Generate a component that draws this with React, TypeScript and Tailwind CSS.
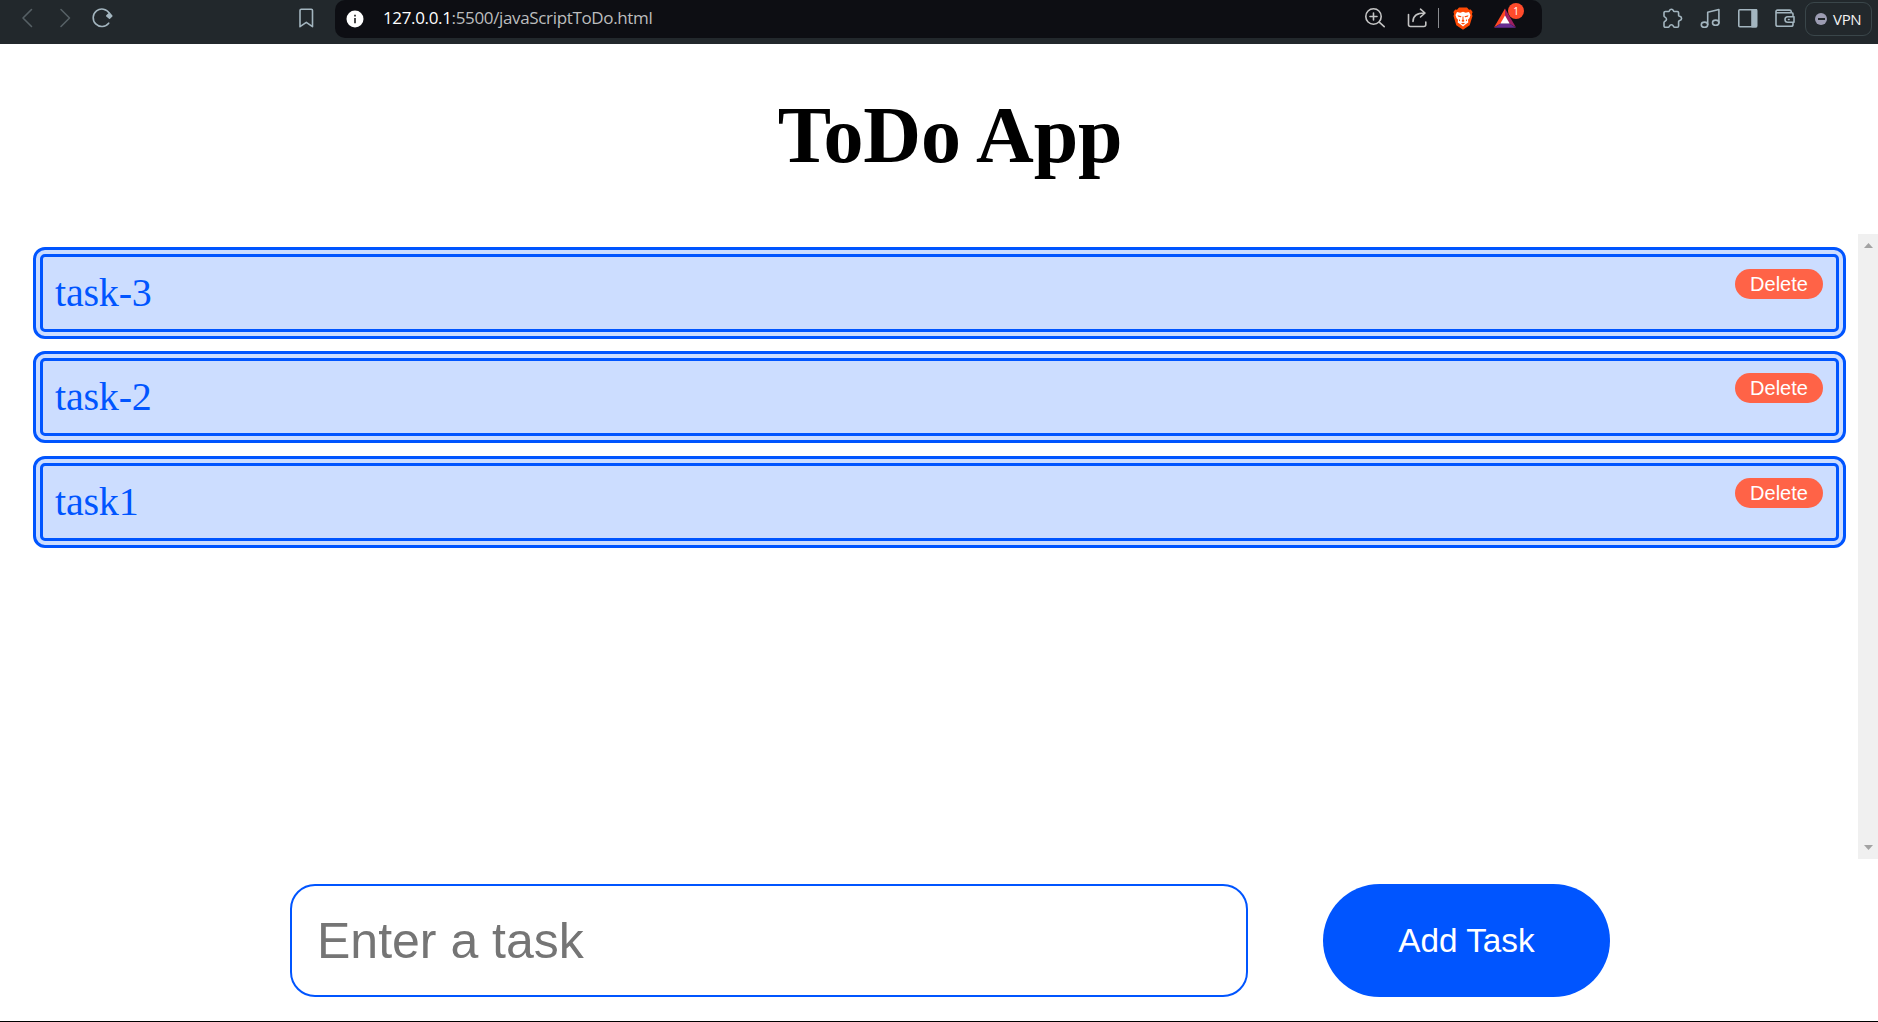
import { ReactNode } from "react";

function Icon({ children, className = "" }: { children: ReactNode; className?: string }) {
  return (
    <svg
      viewBox="0 0 24 24"
      fill="none"
      stroke="currentColor"
      strokeWidth="1.6"
      strokeLinecap="round"
      strokeLinejoin="round"
      className={`size-6 shrink-0 ${className}`}
    >
      {children}
    </svg>
  );
}

function BraveIcon() {
  return (
    <svg viewBox="0 0 20 23" className="ml-[14px] h-[23px] w-5 shrink-0">
      <path d="M6 .5h8l2 2.200 1.800-.200L19.600 5l-.7 2 .6 2-2.800 9.200L10 22.800l-6.700-4.600L.5 9l.6-2-.7-2 1.800-2.500 1.800.2z" fill="#ff4a05" />
      <path d="M4 5l3.300.7L10 4.700l2.700 1L16 5l1.500 3-1 3-1.500 1.800.3 2.700L13 17l-3 2.600L7 17l-2.300-1.500.3-2.700L3.500 11l-1-3z" fill="#fff" />
      <path d="M4.500 8.200l4 1.100-.6.900-2.600-.4zM15.500 8.200l-4 1.100.6.900 2.600-.4zM9.500 9.500h1v3l1 1.500-1.500 1.100L8.500 14l1-1.500zM6 12l1.300 1.600-1.300.7zM14 12l-1.300 1.600 1.300.7zM7.800 16.500l2.200-.8 2.200.8-2.200.9z" fill="#ff4a05" />
    </svg>
  );
}

function BatIcon() {
  return (
    <div className="relative ml-5 h-6 w-6 shrink-0">
      <svg viewBox="0 0 24 24" className="size-6">
        <path d="M12 2.500L1 21.500l7.500-4.500L12 10.500z" fill="#ff4724" />
        <path d="M12 2.500L23 21.500l-7.500-4.500L12 10.500z" fill="#9e1f63" />
        <path d="M1 21.800h22l-7-4.600H8z" fill="#662d91" />
        <path d="M12 9.500l4.600 8H7.400z" fill="#fff" />
      </svg>
      <span className="absolute -top-[3px] left-[15px] flex h-[16px] w-[16px] items-center justify-center rounded-full bg-[#ff4b2b] font-['Open_Sans',sans-serif] text-[10px] leading-none text-white">
        1
      </span>
    </div>
  );
}

function Toolbar() {
  return (
    <header className="flex h-11 shrink-0 items-start bg-[#22282c] font-['Open_Sans',sans-serif] text-[#a3b5bf]">
      <div className="flex h-9 w-[335px] items-center pl-4">
        <Icon className="text-[#566065]">
          <path d="M15.500 3.500L7 12l8.500 8.500" />
        </Icon>
        <Icon className="ml-[13px] text-[#566065]">
          <path d="M8 3.500l8.500 8.500L8 20.500" />
        </Icon>
        <Icon className="ml-[13px]">
          <path d="M19.300 7.200A8.700 8.700 0 1 0 18.700 17.200" />
          <path d="M19.500 7.200l2.300 2.700-2.300 2.300-2.700-2.300z" fill="currentColor" />
        </Icon>
        <Icon className="ml-auto mr-[17px]">
          <path d="M6 4.500a1.200 1.200 0 0 1 1.200-1.200h10.100a1.200 1.200 0 0 1 1.200 1.200v16.200l-6.200-4.400L6 20.700z" />
        </Icon>
      </div>

      <div className="h-[38px] w-[1207px] overflow-hidden rounded-[10px] bg-[#0d0e13]">
        <div className="flex h-9 items-center pl-[11px]">
          <svg viewBox="0 0 18 18" className="mt-px size-[18px] shrink-0">
            <circle cx="9" cy="9" r="8.500" fill="#fff" />
            <path d="M8.100 4.800h1.800v1.800H8.100zM8.100 8h1.800v5.200H8.100z" fill="#333" />
          </svg>
          <div className="ml-[19px] whitespace-nowrap text-[17px] leading-6 tracking-[-0.35px] text-[#bcbdbe]">
            <span className="text-white">127.0.0.1</span>:5500/javaScriptToDo.html
          </div>
          <div className="ml-auto flex h-9 items-center pr-[25px] text-[#c4c4c4]">
            <Icon>
              <circle cx="10.500" cy="10.500" r="7.700" />
              <path d="M16.200 16.200l5 4.500M10.500 7v7M7 10.500h7" />
            </Icon>
            <Icon className="ml-[19px]">
              <path d="M2.500 8.500v10a2 2 0 0 0 2 2h13.300a2 2 0 0 0 2-2V16M7 15.500c0-5 3-8.500 11.500-8.500M14.500 3.200L19 7l-4.500 4" />
            </Icon>
            <div className="ml-[8px] h-5 w-px bg-[#8a8c90]" />
            <BraveIcon />
            <BatIcon />
          </div>
        </div>
      </div>

      <div className="ml-auto flex h-9 items-center pr-[6px]">
        <Icon>
          <path d="M3 6.800a1.300 1.300 0 0 1 1.300-1.300H7.700C8.700 5.500 8 3.300 10.400 3.300S12.100 5.500 13.100 5.500h3.200a1.300 1.300 0 0 1 1.300 1.300V9.400c0 1.300 3 .6 3 3s-3 1.700-3 3V20a1.300 1.300 0 0 1-1.300 1.300H13.500c-1.200 0-.8-2.500-3.100-2.500s-1.900 2.500-3.100 2.500h-3A1.300 1.300 0 0 1 3 20v-3.500c0-1.500 2.500-1 2.500-3.300S3 11.400 3 10z" />
        </Icon>
        <Icon className="ml-[14px]">
          <ellipse cx="5.500" cy="18.700" rx="3.200" ry="2.600" />
          <ellipse cx="16.700" cy="16.700" rx="3.200" ry="2.600" />
          <path d="M8.700 18.500V6.200L19.900 3.500V17" />
        </Icon>
        <Icon className="ml-[13px]">
          <rect x="2.800" y="3.800" width="17.700" height="17" rx="1" />
          <path d="M16 3.800h4.500v17H16z" fill="currentColor" />
        </Icon>
        <Icon className="ml-[13px]">
          <path d="M20 9.500V8A1.200 1.200 0 0 0 18.800 6.800H4.500C2.500 6.800 2.500 4.100 4.500 4.100H16.500A1.800 1.800 0 0 1 18.300 5.800M3 5.500v12.900a1.800 1.800 0 0 0 1.800 1.800H18.200A1.800 1.800 0 0 0 20 18.400V17M21 10.800h-6.300a2.700 2.700 0 0 0 0 5.400H21zM15.500 13.500h.6" />
        </Icon>
        <div className="ml-[8px] mt-px flex h-[34px] w-[67px] items-center rounded-[9px] border border-[#3a464a] pl-[9px] text-[#f2f2f2]">
          <div className="flex size-3 shrink-0 items-center justify-center rounded-full bg-[#9c9cb2]">
            <div className="h-[2px] w-[7px] bg-[#22282c]" />
          </div>
          <span className="ml-[6px] text-[15px] leading-5 tracking-[-0.3px]">VPN</span>
        </div>
      </div>
    </header>
  );
}

function Task({ name }: { name: string }) {
  return (
    <li className="flex h-[92px] items-start justify-between rounded-xl border-[10px] border-double border-[#0055ff] bg-[#ccddff] pl-3 pr-[13px] pt-[12px]">
      <span className="pt-px font-['Liberation_Serif',serif] text-[40px] leading-[46px] tracking-[-0.2px] text-[#0055ff]">{name}</span>
      <button className="h-[30px] w-[88px] rounded-full bg-[#ff6347] text-center font-['Liberation_Sans',sans-serif] text-[20px] leading-[30px] text-white">
        Delete
      </button>
    </li>
  );
}

export default function App() {
  return (
    <div className="flex h-[1022px] w-[1878px] flex-col overflow-hidden border-b border-black bg-white">
      <Toolbar />
      <h1 className="h-[190px] shrink-0 pl-[22px] pt-[45px] text-center font-['Liberation_Serif',serif] text-[80px] font-bold leading-[92px] tracking-[-0.2px] text-black">
        ToDo App
      </h1>
      <main className="flex h-[625px] shrink-0">
        <ul className="flex flex-1 flex-col gap-[12.4px] pl-[33px] pr-3 pt-[13px]">
          <Task name="task-3" />
          <Task name="task-2" />
          <Task name="task1" />
        </ul>
        <div className="flex w-5 flex-col items-center justify-between bg-[#f0f0f0] py-[9px] pl-px">
          <svg viewBox="0 0 9 5" className="h-[5px] w-[9px]">
            <path d="M0 5L4.500 0 9 5z" fill="#a3a3a3" />
          </svg>
          <svg viewBox="0 0 9 5" className="h-[5px] w-[9px]">
            <path d="M0 0L4.500 5 9 0z" fill="#a3a3a3" />
          </svg>
        </div>
      </main>
      <form className="mt-[25px] flex h-[113px] shrink-0 gap-[75px] pl-[290px]" onSubmit={(e) => e.preventDefault()}>
        <input
          placeholder="Enter a task"
          className="h-full w-[958px] rounded-[25px] border-2 border-[#0055ff] bg-white pl-[25px] font-['Liberation_Sans',sans-serif] text-[50px] outline-none placeholder:text-[#757575]"
        />
        <button className="h-full w-[287px] rounded-full bg-[#0055ff] font-['Liberation_Sans',sans-serif] text-[33.3px] text-white">
          Add Task
        </button>
      </form>
    </div>
  );
}
